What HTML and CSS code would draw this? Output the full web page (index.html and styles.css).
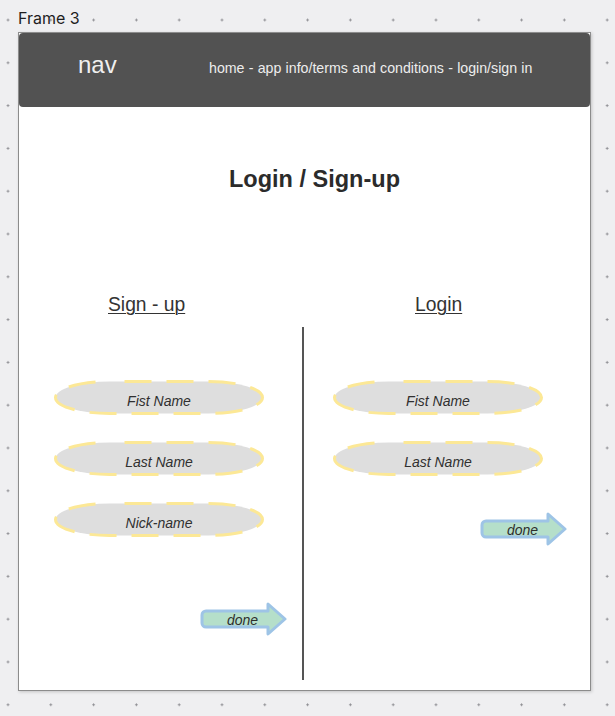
FILE: index.html
```html
<!DOCTYPE html>
<html lang="en">
<head>
<meta charset="utf-8">
<title>Frame 3</title>
<link rel="stylesheet" href="styles.css">
</head>
<body>
<div class="canvas">
  <div class="frame-label">Frame 3</div>
  <div class="frame">
    <nav class="nav">
      <span class="nav-title">nav</span>
      <span class="nav-links">home - app info/terms and conditions - login/sign in</span>
    </nav>
    <h1 class="title">Login / Sign-up</h1>
    <div class="headings">
      <h2 class="heading heading-signup">Sign - up</h2>
      <span></span>
      <h2 class="heading heading-login">Login</h2>
    </div>
    <div class="columns">
      <div class="col col-left">
        <div class="field">
          <svg class="pill" width="212" height="37" viewBox="0 0 212 37"><rect x="2.5" y="2.5" width="207" height="32" rx="54" ry="16"/></svg>
          <span class="field-text">Fist Name</span>
        </div>
        <div class="field">
          <svg class="pill" width="212" height="37" viewBox="0 0 212 37"><rect x="2.5" y="2.5" width="207" height="32" rx="54" ry="16"/></svg>
          <span class="field-text">Last Name</span>
        </div>
        <div class="field">
          <svg class="pill" width="212" height="37" viewBox="0 0 212 37"><rect x="2.5" y="2.5" width="207" height="32" rx="54" ry="16"/></svg>
          <span class="field-text">Nick-name</span>
        </div>
        <div class="done done-left">
          <svg class="arrow" width="88" height="36" viewBox="0 0 88 36"><path d="M6 10 H68 V3 L85 18 L68 33 V26 H6 A4 4 0 0 1 2 22 V14 A4 4 0 0 1 6 10 Z"/></svg>
          <span class="done-text">done</span>
        </div>
      </div>
      <div class="divider"></div>
      <div class="col col-right">
        <div class="field">
          <svg class="pill" width="212" height="37" viewBox="0 0 212 37"><rect x="2.5" y="2.5" width="207" height="32" rx="54" ry="16"/></svg>
          <span class="field-text">Fist Name</span>
        </div>
        <div class="field">
          <svg class="pill" width="212" height="37" viewBox="0 0 212 37"><rect x="2.5" y="2.5" width="207" height="32" rx="54" ry="16"/></svg>
          <span class="field-text">Last Name</span>
        </div>
        <div class="done done-right">
          <svg class="arrow" width="88" height="36" viewBox="0 0 88 36"><path d="M6 10 H68 V3 L85 18 L68 33 V26 H6 A4 4 0 0 1 2 22 V14 A4 4 0 0 1 6 10 Z"/></svg>
          <span class="done-text">done</span>
        </div>
      </div>
    </div>
  </div>
</div>
</body>
</html>
```
FILE: styles.css
```css
html, body {
  margin: 0;
  padding: 0;
}

body {
  font-family: "Liberation Sans", Arial, sans-serif;
  background: #efeff1;
}

.canvas {
  height: 716px;
  overflow: hidden;
  background-color: #efeff1;
  background-image: radial-gradient(circle at center, #8a8a8f 0, #8a8a8f 0.9px, rgba(138,138,143,0) 1.4px);
  background-size: 42.8px 42.8px;
  background-position: -13.4px -1.4px;
}

.frame-label {
  font-family: Inter, "Noto Sans", sans-serif;
  font-size: 16px;
  line-height: 20px;
  color: #1e1e1e;
  padding: 8px 0 0 18px;
}

.frame {
  box-sizing: border-box;
  width: 573px;
  height: 659px;
  margin: 4px 0 0 18px;
  background: #ffffff;
  border: 1px solid #8c8c8c;
  box-shadow: 1px 1px 3px rgba(0, 0, 0, 0.18);
}

.nav {
  box-sizing: border-box;
  height: 74px;
  background: #525252;
  border-radius: 4px;
  display: flex;
  align-items: baseline;
  padding: 18px 0 0 59px;
}

.nav-title {
  width: 131px;
  font-size: 24px;
  line-height: 28px;
  color: #efefef;
}

.nav-links {
  font-size: 14.2px;
  line-height: 18px;
  word-spacing: 0.3px;
  color: #ededed;
}

.title {
  margin: 58px 0 0 0;
  padding-left: 20px;
  text-align: center;
  font-size: 23.5px;
  line-height: 28px;
  font-weight: bold;
  color: #2b2b2b;
}

.headings {
  display: grid;
  grid-template-columns: 283px 2px 1fr;
  margin-top: 100px;
}

.heading {
  margin: 0;
  font-size: 19.3px;
  line-height: 24px;
  font-weight: normal;
  color: #333333;
  text-decoration: underline;
  text-decoration-thickness: 1px;
  text-underline-offset: 2px;
}

.heading-signup {
  padding-left: 89px;
}

.heading-login {
  padding-left: 111px;
}

.columns {
  display: grid;
  grid-template-columns: 283px 2px 1fr;
  height: 353px;
  margin-top: 10px;
}

.divider {
  background: #555555;
}

.col {
  display: flex;
  flex-direction: column;
  align-items: flex-start;
  gap: 24px;
  padding-top: 52px;
}

.col-left {
  padding-left: 34px;
}

.col-right {
  padding-left: 28px;
}

.field {
  display: grid;
  width: 212px;
  height: 37px;
}

.field > *,
.done > * {
  grid-area: 1 / 1;
}

.pill rect {
  fill: #dedede;
  stroke: #fce896;
  stroke-width: 3;
  stroke-dasharray: 27 15;
  stroke-dashoffset: 27;
}

.field-text {
  justify-self: center;
  align-self: start;
  margin-top: 14px;
  font-size: 14px;
  line-height: 16px;
  font-style: italic;
  color: #303030;
}

.done {
  display: grid;
  width: 88px;
  height: 36px;
}

.done-left {
  margin: 39px 0 0 147px;
}

.done-right {
  margin: 10px 0 0 148px;
}

.arrow path {
  fill: #b5dfca;
  stroke: #9ec4e6;
  stroke-width: 3;
  stroke-linejoin: round;
}

.done-text {
  justify-self: start;
  align-self: start;
  margin: 11px 0 0 27px;
  font-size: 14px;
  line-height: 16px;
  font-style: italic;
  color: #2e2e2e;
}
```
